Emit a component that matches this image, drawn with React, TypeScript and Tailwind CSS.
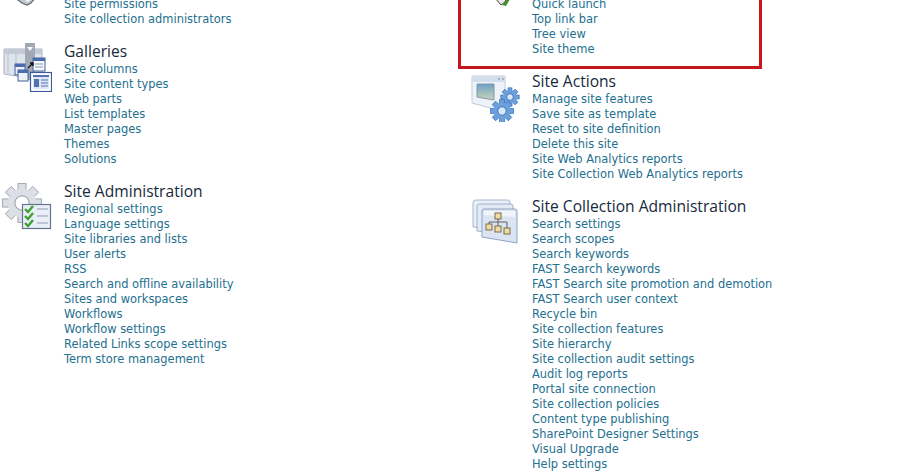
const linkFont = "font-['DejaVu_Sans','Liberation_Sans',sans-serif]";

function PermIcon() {
  return (
    <svg width="40" height="10" viewBox="0 0 40 10">
      <path d="M14 0 L22 6 L27 8 L31 6 L36 0 Z" fill="#c4c9d1" stroke="#5f6672" strokeWidth="1.2" />
      <path d="M23 0 L27 5 L31 3 L33 0 Z" fill="#f2f4f7" />
    </svg>
  );
}

function GalleriesIcon() {
  return (
    <svg width="52" height="50" viewBox="0 0 52 50">
      <path d="M4 7 H42 V38 L4 32 Z" fill="#dfe4ec" stroke="#a9b1be" />
      <path d="M4 7 H42 V12 H4 Z" fill="#c3cad6" />
      <path d="M16 12 V33 M8 12 V31" stroke="#b8c0cc" />
      <path d="M25 1 H35 V38 H25 Z" fill="#a3a8b6" />
      <path d="M27 5 H33 L30 9 Z" fill="#fff" />
      <rect x="15" y="22" width="10" height="11" fill="#eef2f8" stroke="#43609c" />
      <rect x="15" y="22" width="10" height="3" fill="#4a6cb0" />
      <rect x="18" y="28" width="10" height="11" fill="#eef2f8" stroke="#43609c" />
      <rect x="18" y="28" width="10" height="3" fill="#4a6cb0" />
      <rect x="33" y="16" width="12" height="13" fill="#f4f6fa" stroke="#43609c" />
      <rect x="33" y="16" width="12" height="3" fill="#4a6cb0" />
      <path d="M35 22 H43 M35 25 H43" stroke="#8b98b2" />
      <path d="M28 26 L33 21 M30 21 H33 V24" stroke="#111" strokeWidth="1.4" fill="none" />
      <rect x="30.5" y="30.5" width="21" height="19" fill="#fff" stroke="#3e5b9a" strokeWidth="1.2" />
      <rect x="33" y="33" width="16" height="14" fill="#dfe6f3" />
      <rect x="33" y="33" width="16" height="2" fill="#5472b0" />
      <rect x="34" y="37" width="5" height="8" fill="#5472b0" />
      <path d="M41 38 H48 M41 41 H48 M41 44 H48" stroke="#5472b0" />
    </svg>
  );
}

function Gear({ cx, cy, r, fill, stroke, hole = "#fff" }: { cx: number; cy: number; r: number; fill: string; stroke: string; hole?: string }) {
  const teeth = [0, 45, 90, 135, 180, 225, 270, 315];
  return (
    <g>
      {teeth.map((a) => (
        <rect
          key={a}
          x={cx - r * 0.24}
          y={cy - r * 1.14}
          width={r * 0.48}
          height={r * 0.5}
          fill={fill}
          stroke={stroke}
          strokeWidth="0.8"
          transform={`rotate(${a} ${cx} ${cy})`}
        />
      ))}
      <circle cx={cx} cy={cy} r={r * 0.84} fill={fill} />
      <circle cx={cx} cy={cy} r={r * 0.42} fill={hole} stroke={stroke} strokeWidth="1" />
    </g>
  );
}

function AdminIcon() {
  return (
    <svg width="52" height="48" viewBox="0 0 52 48">
      <Gear cx={22} cy={21} r={17} fill="#dcdfe5" stroke="#8f97a3" />
      <rect x="22.5" y="22.5" width="28" height="24" fill="#e9eef7" stroke="#66758f" strokeWidth="1.2" />
      {[27, 34, 41].map((y) => (
        <g key={y}>
          <path d={`M25 ${y} L28 ${y + 3} L33 ${y - 3}`} stroke="#3fa12f" strokeWidth="2.4" fill="none" />
          <path d={`M37 ${y} H48`} stroke="#8f9bb0" />
        </g>
      ))}
    </svg>
  );
}

function ActionsIcon() {
  return (
    <svg width="52" height="50" viewBox="0 0 52 50">
      <defs>
        <linearGradient id="thumb" x1="0" y1="0" x2="0" y2="1">
          <stop offset="0" stopColor="#6f9fc4" />
          <stop offset="1" stopColor="#c9d6b8" />
        </linearGradient>
      </defs>
      <path d="M4 4 H37 V40 L4 31 Z" fill="#eef3f9" stroke="#c2ccd9" />
      <path d="M4 4 H37 V10 H4 Z" fill="#d3deed" />
      <path d="M30 7 H32 M34 7 H36" stroke="#7d8b9e" />
      <path d="M9 12 H26 V28 L9 25 Z" fill="url(#thumb)" stroke="#7f97ad" />
      <Gear cx={42} cy={25} r={8} fill="#6c9fdb" stroke="#3a78c0" hole="#dbe8f7" />
      <Gear cx={34} cy={39} r={10} fill="#6c9fdb" stroke="#3a78c0" hole="#dbe8f7" />
    </svg>
  );
}

function CollectionIcon() {
  return (
    <svg width="52" height="48" viewBox="0 0 52 48">
      <path d="M5 6 Q5 3 8 3 H40 Q42 3 42 6 V34 L5 30 Z" fill="#e9eff8" stroke="#a7b7d0" />
      <path d="M9 9 Q9 7 12 7 H43 Q45 7 45 9 V38 L9 34 Z" fill="#e2eaf6" stroke="#a0b2cd" />
      <path d="M14 14 Q14 12 16 12 H47 Q49 12 49 14 V46 L14 40 Z" fill="#dbe4f2" stroke="#8ea3c4" />
      <path d="M16 14 H47 V20 L16 18 Z" fill="#f1f5fa" />
      <rect x="27" y="16" width="6" height="6" fill="#f0dca8" stroke="#7b6a45" />
      <path d="M30 22 V25 M21 27 V25 H39 V31 M30 25 V29" stroke="#5f5f5f" fill="none" />
      <rect x="18" y="27" width="6" height="6" fill="#f0dca8" stroke="#7b6a45" />
      <rect x="27" y="29" width="6" height="6" fill="#f0dca8" stroke="#7b6a45" />
      <rect x="36" y="31" width="6" height="6" fill="#f0dca8" stroke="#7b6a45" />
    </svg>
  );
}

function LookIcon() {
  return (
    <svg width="50" height="10" viewBox="0 0 50 10">
      <path d="M27 1 L31 -2 H40 L37 5 L33 8 Z" fill="#e8e8e8" stroke="#444" />
      <path d="M34 8 L41 0 L42 2 L38 9 Z" fill="#3f8f2c" />
    </svg>
  );
}

function Section({
  title,
  links,
  icon,
}: {
  title?: string;
  links: string[];
  icon: React.ReactNode;
}) {
  return (
    <div className="flex">
      <div className="w-[64px] shrink-0">{icon}</div>
      <div>
        {title && (
          <h3 className="h-[20px] text-[15.6px] leading-[18px] whitespace-nowrap text-[#17293d] font-['Open_Sans','Noto_Sans',sans-serif]">
            {title}
          </h3>
        )}
        <ul>
          {links.map((l) => (
            <li key={l} className={`h-[15px] text-[11.45px] leading-[15px] whitespace-nowrap text-[#23708f] ${linkFont}`}>
              {l}
            </li>
          ))}
        </ul>
      </div>
    </div>
  );
}

export default function App() {
  return (
    <div className="h-[474px] w-[904px] overflow-hidden bg-white">
      <div className="mt-[-3px] flex">
        <div className="flex w-[458px] shrink-0 flex-col gap-[15px]">
          <Section icon={<PermIcon />} links={["Site permissions", "Site collection administrators"]} />
          <Section
            icon={<GalleriesIcon />}
            title="Galleries"
            links={["Site columns", "Site content types", "Web parts", "List templates", "Master pages", "Themes", "Solutions"]}
          />
          <Section
            icon={<AdminIcon />}
            title="Site Administration"
            links={[
              "Regional settings",
              "Language settings",
              "Site libraries and lists",
              "User alerts",
              "RSS",
              "Search and offline availability",
              "Sites and workspaces",
              "Workflows",
              "Workflow settings",
              "Related Links scope settings",
              "Term store management",
            ]}
          />
        </div>
        <div className="flex flex-col">
          <div className="mb-[3px] w-[304px] border-[3px] border-t-0 border-[#c8161d] pb-[9px] pl-[7px]">
            <Section icon={<LookIcon />} links={["Quick launch", "Top link bar", "Tree view", "Site theme"]} />
          </div>
          <div className="flex flex-col gap-[15px] pl-[10px]">
            <Section
              icon={<ActionsIcon />}
              title="Site Actions"
              links={[
                "Manage site features",
                "Save site as template",
                "Reset to site definition",
                "Delete this site",
                "Site Web Analytics reports",
                "Site Collection Web Analytics reports",
              ]}
            />
            <Section
              icon={<CollectionIcon />}
              title="Site Collection Administration"
              links={[
                "Search settings",
                "Search scopes",
                "Search keywords",
                "FAST Search keywords",
                "FAST Search site promotion and demotion",
                "FAST Search user context",
                "Recycle bin",
                "Site collection features",
                "Site hierarchy",
                "Site collection audit settings",
                "Audit log reports",
                "Portal site connection",
                "Site collection policies",
                "Content type publishing",
                "SharePoint Designer Settings",
                "Visual Upgrade",
                "Help settings",
              ]}
            />
          </div>
        </div>
      </div>
    </div>
  );
}
